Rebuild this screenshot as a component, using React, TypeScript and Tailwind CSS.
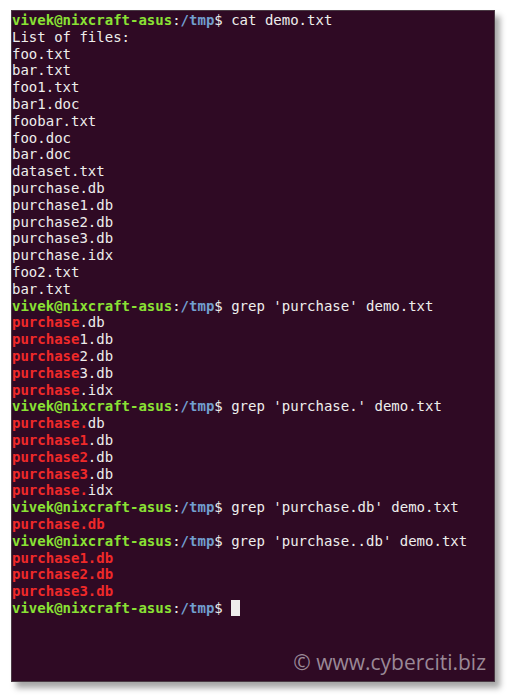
import type { ReactNode } from 'react';

// Ubuntu terminal screenshot: grep demo

const Prompt = ({ cmd, cursor }: { cmd?: string; cursor?: boolean }) => (
  <div className="h-[16.8px]">
    <span className="font-bold text-[#8ae234]">vivek@nixcraft-asus</span>
    <span className="text-[#eeeeec]">:</span>
    <span className="font-bold text-[#729fcf]">/tmp</span>
    <span className="text-[#eeeeec]">$ {cmd}</span>
    {cursor && <span className="inline-block w-[8.4px] h-[16px] bg-[#eeeeec] align-[-3px]" />}
  </div>
);

const Line = ({ children }: { children: ReactNode }) => (
  <div className="h-[16.8px] text-[#eeeeec] whitespace-pre">{children}</div>
);

const Hit = ({ children }: { children: ReactNode }) => (
  <span className="font-bold text-[#ef2929]">{children}</span>
);

const files = [
  'List of files:', 'foo.txt', 'bar.txt', 'foo1.txt', 'bar1.doc', 'foobar.txt', 'foo.doc', 'bar.doc',
  'dataset.txt', 'purchase.db', 'purchase1.db', 'purchase2.db', 'purchase3.db', 'purchase.idx', 'foo2.txt', 'bar.txt',
];

export default function App() {
  return (
    <div className="w-[511px] h-[700px] bg-white pt-[10px] pl-[11px]">
      <div
        className="relative w-[484px] h-[672px] pt-[1px] bg-[#2f0a24] border border-[#4a3a44] shadow-[5px_6px_6px_rgba(0,0,0,0.35)] text-[14px] leading-[16.8px]"
        style={{ fontFamily: '"DejaVu Sans Mono", monospace' }}
      >
        <Prompt cmd="cat demo.txt" />
        {files.map((f, i) => <Line key={i}>{f}</Line>)}

        <Prompt cmd="grep 'purchase' demo.txt" />
        <Line><Hit>purchase</Hit>.db</Line>
        <Line><Hit>purchase</Hit>1.db</Line>
        <Line><Hit>purchase</Hit>2.db</Line>
        <Line><Hit>purchase</Hit>3.db</Line>
        <Line><Hit>purchase</Hit>.idx</Line>

        <Prompt cmd="grep 'purchase.' demo.txt" />
        <Line><Hit>purchase.</Hit>db</Line>
        <Line><Hit>purchase1</Hit>.db</Line>
        <Line><Hit>purchase2</Hit>.db</Line>
        <Line><Hit>purchase3</Hit>.db</Line>
        <Line><Hit>purchase.</Hit>idx</Line>

        <Prompt cmd="grep 'purchase.db' demo.txt" />
        <Line><Hit>purchase.db</Hit></Line>

        <Prompt cmd="grep 'purchase..db' demo.txt" />
        <Line><Hit>purchase1.db</Hit></Line>
        <Line><Hit>purchase2.db</Hit></Line>
        <Line><Hit>purchase3.db</Hit></Line>
        <Prompt cursor />

        <div
          className="absolute right-[8px] bottom-[8px] text-[21px] leading-none text-[#9a8896]"
          style={{ fontFamily: '"Open Sans", sans-serif' }}
        >
          © www.cyberciti.biz
        </div>
      </div>
    </div>
  );
}
